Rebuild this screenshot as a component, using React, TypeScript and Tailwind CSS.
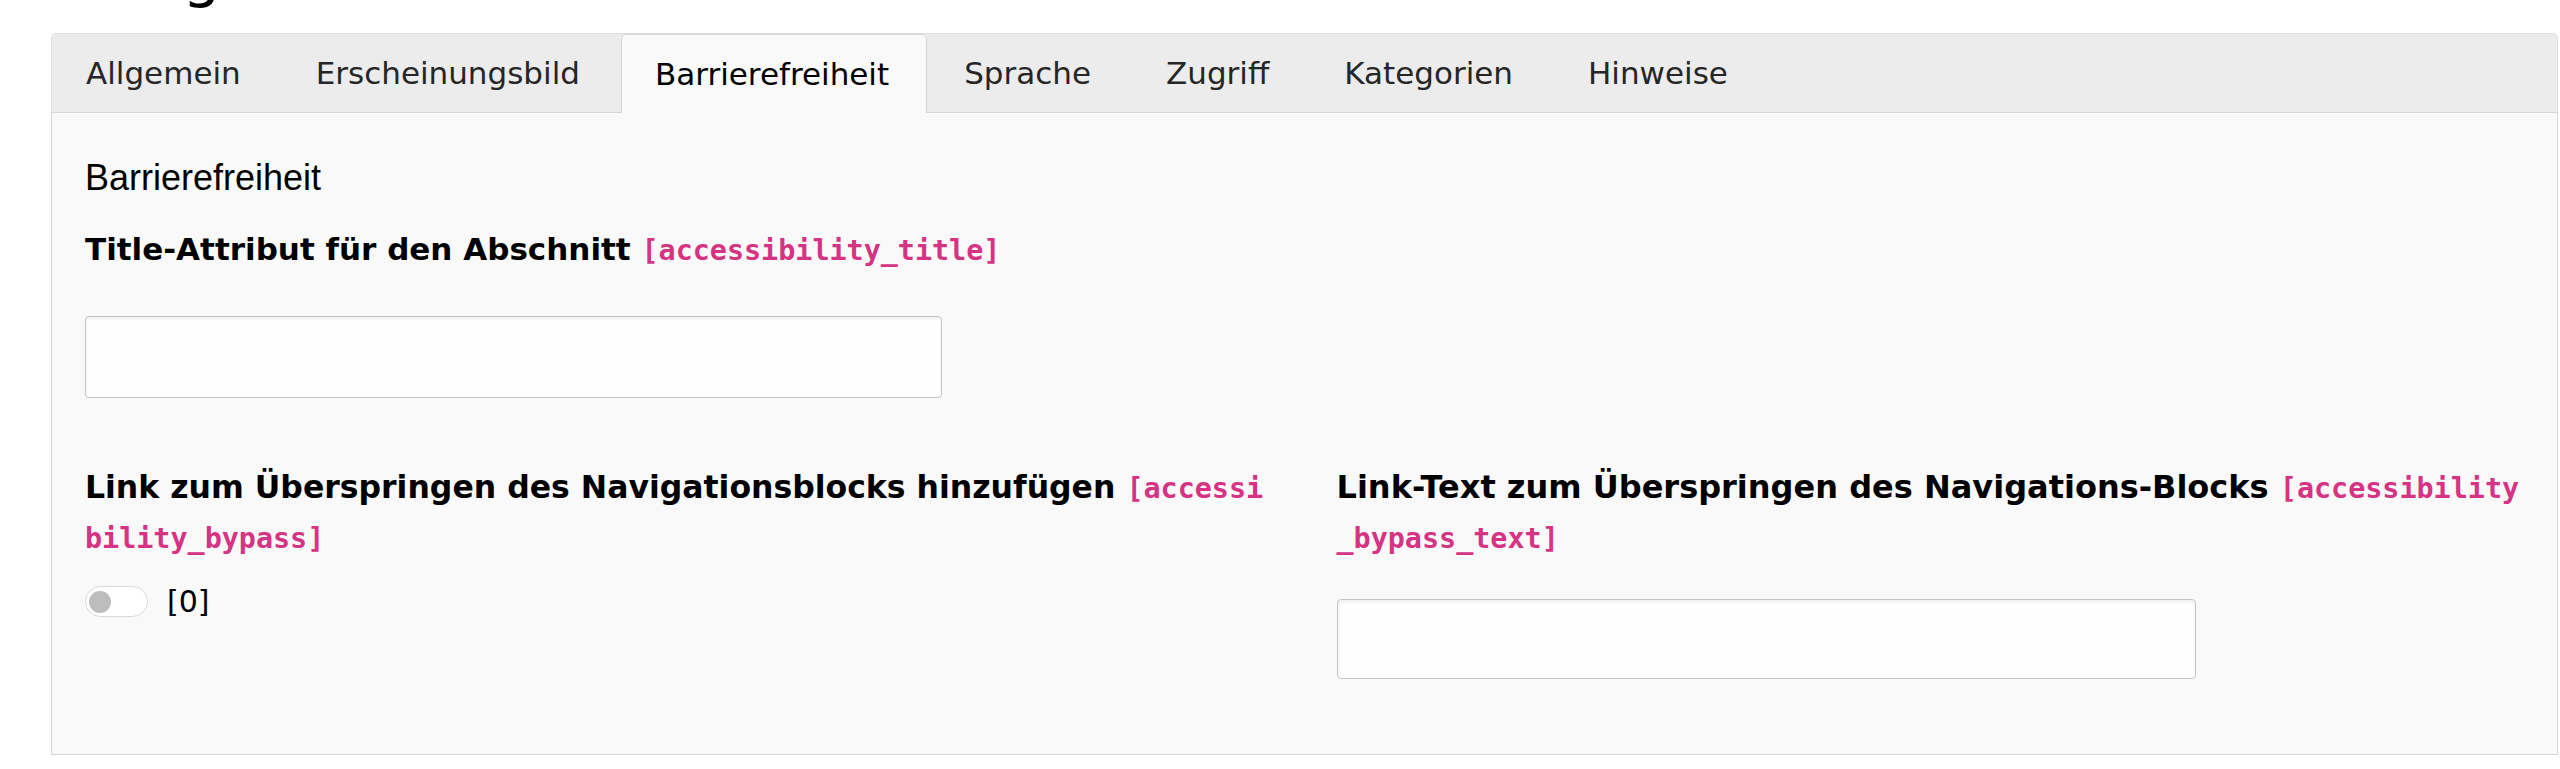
const tabs = [
  'Allgemein',
  'Erscheinungsbild',
  'Barrierefreiheit',
  'Sprache',
  'Zugriff',
  'Kategorien',
  'Hinweise',
];

const active = 'Barrierefreiheit';

function FieldLabel({ text, field, size }: { text: string; field: string; size: string }) {
  return (
    <label className={`block font-bold leading-[49px] text-black ${size}`}>
      {text}{' '}
      <code className="break-all font-['DejaVu_Sans_Mono',monospace] text-[28.4px] font-bold text-[#d63384]">
        [{field}]
      </code>
    </label>
  );
}

function TextInput({ className }: { className: string }) {
  return (
    <input
      type="text"
      className={`block rounded-[4px] border border-[#c4c4c4] bg-[#fefefe] shadow-[inset_0_2px_3px_rgba(0,0,0,0.06)] outline-none ${className}`}
    />
  );
}

export default function App() {
  return (
    <div className="min-h-screen bg-white font-['DejaVu_Sans',sans-serif] text-[#222]">
      <div className="h-[33px] overflow-hidden pl-[90px]">
        <h1 className="-mt-[56px] text-[60px] leading-[60px] text-black">Eingabemaske bearbeiten</h1>
      </div>

      <div className="ml-[51px] mr-[2px]">
        <div className="flex h-[80px] rounded-t-[5px] border border-[#dedede] bg-[#ececec]">
          {tabs.map((tab) =>
            tab === active ? (
              <div
                key={tab}
                className="relative z-10 mr-[3px] flex h-[79px] items-center rounded-t-[5px] border-x border-t border-[#d6d6d6] bg-[#f9f9f9] pl-[33px] pr-[37px] text-[31px] text-black"
              >
                {tab}
              </div>
            ) : (
              <div
                key={tab}
                className="mr-[3px] flex h-[78px] items-center border border-transparent pl-[33px] pr-[37px] text-[31px] text-[#262626]"
              >
                {tab}
              </div>
            )
          )}
        </div>

        <div className="-mt-px border border-[#d6d6d6] bg-[#f9f9f9] px-[33px] pt-[43px] pb-[75px]">
          <h2 className="font-['Liberation_Sans',sans-serif] text-[36px] leading-[44px] text-black">
            Barrierefreiheit
          </h2>

          <div className="mt-[25px]">
            <FieldLabel text="Title-Attribut für den Abschnitt" field="accessibility_title" size="text-[31px]" />
            <TextInput className="mt-[41px] h-[82px] w-[857px]" />
          </div>

          <div className="mt-[65px] grid grid-cols-2 gap-x-[64px]">
            <div>
              <FieldLabel
                text="Link zum Überspringen des Navigationsblocks hinzufügen"
                field="accessibility_bypass"
                size="text-[31.5px]"
              />
              <div className="mt-[14px] flex h-[49px] items-center gap-[19px]">
                <span className="flex h-[31px] w-[63px] items-center rounded-full border border-[#dadada] bg-white px-[3px]">
                  <span className="h-[22px] w-[22px] rounded-full bg-[#bdbdbd]" />
                </span>
                <span className="text-[30px] text-black">[0]</span>
              </div>
            </div>
            <div>
              <FieldLabel
                text="Link-Text zum Überspringen des Navigations-Blocks"
                field="accessibility_bypass_text"
                size="text-[32px]"
              />
              <TextInput className="mt-[36px] h-[80px] w-[859px]" />
            </div>
          </div>
        </div>
      </div>
    </div>
  );
}
